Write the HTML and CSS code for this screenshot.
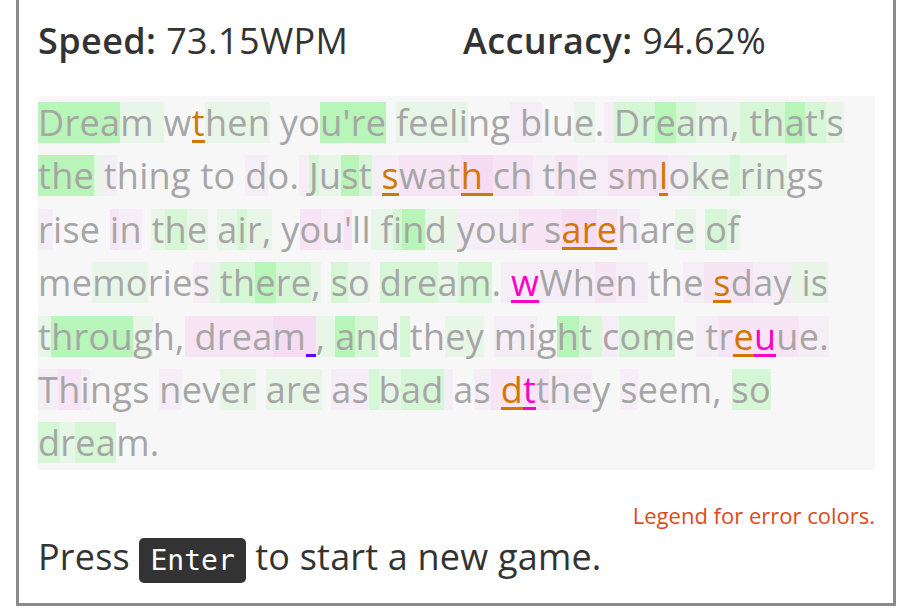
FILE: index.html
```html
<!DOCTYPE html>
<html lang="en">
<head>
<meta charset="utf-8">
<title>Typing game results</title>
<link rel="stylesheet" href="styles.css">
</head>
<body>
<div class="game">
  <div class="stats">
    <div class="stat"><span class="label">Speed:</span> 73.15WPM</div>
    <div class="stat"><span class="label">Accuracy:</span> 94.62%</div>
  </div>
  <div class="passage">
<div class="line"><span class="s3">Drea</span><span class="s1">m </span>w<span class="eo">t</span><span class="s1">hen</span> yo<span class="s3">u're</span> <span class="s1">feeli</span>ng<span class="p1"> b</span>lu<span class="s1">e</span>.<span class="p1"> </span><span class="s2">Dr</span><span class="s3">e</span><span class="s2">a</span><span class="s1">m,</span><span class="s2"> th</span><span class="s3">a</span><span class="s2">t'</span><span class="s1">s</span></div>
<div class="line"><span class="s3">the</span><span class="s1"> </span><span class="p1">t</span>hing to <span class="p1">d</span>o.<span class="p1"> </span><span class="s2">J</span><span class="s1">u</span><span class="s3">s</span><span class="s2">t</span><span class="p1"> </span><span class="p1 eo">s</span><span class="p2">wat</span><span class="p3 eo">h </span><span class="p2">ch</span><span class="p1"> t</span><span class="p2">h</span><span class="p1">e </span><span class="p2">sm</span><span class="p2 eo">l</span><span class="p1">o</span><span class="s1">ke</span><span class="s2"> </span><span class="s1">rin</span>gs</div>
<div class="line"><span class="p1">r</span>ise <span class="p2">i</span><span class="p1">n</span> <span class="s1">t</span><span class="s2">h</span><span class="s1">e</span> <span class="s1">a</span><span class="s2">i</span><span class="s1">r,</span> y<span class="p2">o</span><span class="p1">u</span><span class="p2">'</span>ll<span class="s1"> f</span><span class="s2">i</span><span class="s3">n</span><span class="s1">d </span><span class="p1">you</span><span class="p2">r s</span><span class="p3 eo">ar</span><span class="p2 eo">e</span><span class="p1">h</span>ar<span class="s1">e</span> <span class="s2">o</span><span class="s1">f</span></div>
<div class="line">me<span class="s1">mo</span>rie<span class="p1">s</span><span class="s1"> </span><span class="s2">th</span><span class="s3">e</span><span class="s2">re</span><span class="s1">,</span> <span class="s2">s</span><span class="s1">o</span> <span class="s2">dre</span><span class="s1">a</span><span class="s2">m</span>.<span class="p1"> </span><span class="p1 em">w</span><span class="p1">Wh</span><span class="p2">e</span><span class="p1">n </span>th<span class="p1">e</span><span class="p2"> </span><span class="p2 eo">s</span><span class="p2">d</span><span class="p1">ay</span><span class="s1"> is</span></div>
<div class="line"><span class="s1">t</span><span class="s3">hrou</span><span class="s1">g</span>h,<span class="p2"> drea</span><span class="p3">m</span><span class="p3 ev"> </span><span class="s1">, </span><span class="s3">a</span><span class="s2">n</span>d<span class="s2"> </span>th<span class="s1">ey</span> <span class="p1">mi</span>g<span class="s3">h</span><span class="s2">t </span><span class="p1">c</span><span class="s2">om</span>e<span class="p1"> t</span><span class="p2">r</span><span class="p2 eo">e</span><span class="p2 em">u</span><span class="p2">u</span><span class="p1">e.</span></div>
<div class="line"><span class="p1">T</span><span class="p2">h</span><span class="p1">i</span>ngs <span class="p1">n</span>ev<span class="s1">er</span> <span class="s1">are</span> <span class="p1">as</span><span class="s2"> </span><span class="s1">b</span><span class="s2">ad</span><span class="p1"> </span>a<span class="p1">s</span><span class="p2"> </span><span class="p2 eo">d</span><span class="p2 em">t</span><span class="p2">t</span><span class="p1">he</span>y <span class="p1">s</span>eem, <span class="s2">so</span></div>
<div class="line"><span class="s2">d</span><span class="s1">r</span><span class="s2">ea</span>m.</div>
  </div>
  <div class="legend">Legend for error colors.</div>
  <div class="prompt">Press <kbd class="key">Enter</kbd> to start a new game.</div>
</div>
</body>
</html>
```
FILE: styles.css
```css
html, body {
  margin: 0;
  padding: 0;
  background: #ffffff;
}

body {
  font-family: "Open Sans", "Noto Sans", sans-serif;
}

.game {
  box-sizing: border-box;
  width: 880px;
  margin: -3px 0 0 16px;
  border: 3px solid #8a8a8a;
  padding: 13.5px 18px 19px 19px;
}

.stats {
  display: grid;
  grid-template-columns: 1fr 1fr;
  column-gap: 13px;
  font-size: 36px;
  line-height: 54px;
  letter-spacing: 0.4px;
  color: #333333;
  margin-bottom: 28.5px;
}

.label {
  font-weight: 600;
}

.passage {
  background: #f7f7f7;
  font-size: 36px;
  line-height: 53.4px;
  letter-spacing: 0.3px;
  color: #a6a6a6;
}

.line {
  white-space: pre;
}

.line span {
  display: inline-block;
  height: 41px;
  line-height: 41px;
  vertical-align: baseline;
}

.s1 { background: #e7f6e7; }
.s2 { background: #d6f7d6; }
.s3 { background: #b8f5b8; }
.p1 { background: #f6eef6; }
.p2 { background: #f7e4f5; }
.p3 { background: #f6dcf3; }

.eo {
  color: #d27800;
  box-shadow: inset 0 -3px 0 #d27800;
}

.em {
  color: #ff00c8;
  box-shadow: inset 0 -3px 0 #ff00c8;
}

.ev {
  box-shadow: inset 0 -3px 0 #6600ff;
}

.legend {
  margin-top: 30px;
  text-align: right;
  font-size: 22px;
  line-height: 30px;
  color: #e0481b;
}

.prompt {
  font-size: 36px;
  line-height: 54px;
  letter-spacing: 0.2px;
  color: #333333;
}

.key {
  display: inline-block;
  height: 45px;
  line-height: 45px;
  padding: 0 11px;
  border-radius: 5px;
  background: #333333;
  color: #ffffff;
  font-family: "DejaVu Sans Mono", monospace;
  font-size: 28px;
  letter-spacing: 0;
  vertical-align: baseline;
}
```
